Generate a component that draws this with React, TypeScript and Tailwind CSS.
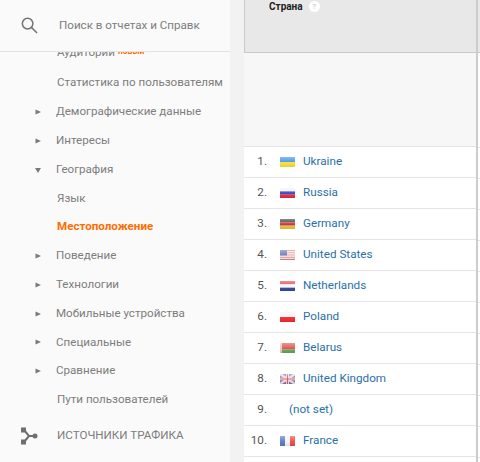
const FONT = "font-['Roboto',sans-serif]";

function Arrow({ open }: { open?: boolean }) {
  return (
    <svg width="6" height="6" viewBox="0 0 6 6" className="shrink-0">
      {open ? <path d="M0 1h6L3 6z" fill="#7a7a7a" /> : <path d="M0.5 0.5L6 3 0.5 5.5z" fill="#7a7a7a" />}
    </svg>
  );
}

function NavRow({ label, arrow, open, active }: { label: string; arrow?: boolean; open?: boolean; active?: boolean }) {
  return (
    <div className="flex h-[28.8px] items-center pl-[35px]">
      <div className={arrow ? "flex w-[21px] shrink-0 items-center" : "flex w-[22px] shrink-0 items-center"}>{arrow && <Arrow open={open} />}</div>
      <span className={active ? "text-[11.6px] font-bold text-[#ff6d00]" : "text-[11.6px] text-[#7d7d7d]"}>{label}</span>
    </div>
  );
}

function Flag({ code }: { code: string }) {
  const stripes: Record<string, string[]> = {
    ua: ["#3f8fe8", "#f7e03c"],
    ru: ["#f4f4f8", "#3240c8", "#ea2a30"],
    de: ["#3a3a3a", "#c8322c", "#e6c23c"],
    nl: ["#e8454a", "#f6f6f6", "#34489c"],
    pl: ["#f4f4f4", "#f02a30"],
  };
  let body;
  if (code === "us") {
    body = (
      <>
        {[0, 1, 2, 3, 4, 5].map((i) => (
          <rect key={i} x="0" y={i * 2} width="15" height="1" fill="#e06a70" />
        ))}
        {[0, 1, 2, 3, 4, 5].map((i) => (
          <rect key={i} x="0" y={i * 2 + 1} width="15" height="1" fill="#f6e8e8" />
        ))}
        <rect width="7" height="6" fill="#6478c0" />
      </>
    );
  } else if (code === "by") {
    body = (
      <>
        <rect width="15" height="7" fill="#e0504a" />
        <rect y="7" width="15" height="4" fill="#5fa85a" />
        <rect width="2" height="11" fill="#f4c4c0" />
      </>
    );
  } else if (code === "gb") {
    body = (
      <>
        <rect width="15" height="11" fill="#6a78b8" />
        <path d="M0 0L15 11M15 0L0 11" stroke="#f2d8dc" strokeWidth="2.5" />
        <path d="M7.5 0V11M0 5.5H15" stroke="#f6e8ea" strokeWidth="3" />
        <path d="M7.5 0V11M0 5.5H15" stroke="#e0505c" strokeWidth="1.2" />
      </>
    );
  } else if (code === "fr") {
    body = (
      <>
        <rect width="5" height="11" fill="#5a78c8" />
        <rect x="5" width="5" height="11" fill="#f4f4f6" />
        <rect x="10" width="5" height="11" fill="#ec4a44" />
      </>
    );
  } else {
    const s = stripes[code];
    const h = 11 / s.length;
    body = s.map((c, i) => <rect key={i} y={i * h} width="15" height={h} fill={c} />);
  }
  return (
    <svg width="15" height="10" viewBox="0 0 15 11" preserveAspectRatio="none" className="mt-[2px] shrink-0">
      <defs>
        <linearGradient id={`gloss-${code}`} x1="0" y1="0" x2="0" y2="1">
          <stop offset="0" stopColor="#ffffff" stopOpacity="0.4" />
          <stop offset="0.55" stopColor="#ffffff" stopOpacity="0.05" />
          <stop offset="1" stopColor="#000000" stopOpacity="0.08" />
        </linearGradient>
      </defs>
      {body}
      <rect width="15" height="11" fill={`url(#gloss-${code})`} />
    </svg>
  );
}

function Row({ n, name, code }: { n: number; name: string; code?: string }) {
  return (
    <div className="flex h-[31px] items-center border-b border-[#e5e5e5] bg-white pb-[1px]">
      <span className="w-[23px] shrink-0 text-right text-[11.7px] text-[#555555]">{n}.</span>
      {code ? (
        <div className="flex items-center pl-[13px]">
          <Flag code={code} />
          <span className="pl-[8px] text-[11.7px] text-[#2a70a8]">{name}</span>
        </div>
      ) : (
        <span className="pl-[22px] text-[11.7px] text-[#2a70a8]">{name}</span>
      )}
    </div>
  );
}

const ROWS = [
  { name: "Ukraine", code: "ua" },
  { name: "Russia", code: "ru" },
  { name: "Germany", code: "de" },
  { name: "United States", code: "us" },
  { name: "Netherlands", code: "nl" },
  { name: "Poland", code: "pl" },
  { name: "Belarus", code: "by" },
  { name: "United Kingdom", code: "gb" },
  { name: "(not set)" },
  { name: "France", code: "fr" },
];

export default function App() {
  return (
    <div className={`flex h-[462px] w-[480px] overflow-hidden bg-white ${FONT}`}>
      <aside className="flex h-full w-[230px] shrink-0 flex-col bg-[#fafafa]">
        <div className="flex h-[52px] shrink-0 items-center border-b border-[#e3e3e3] pl-[21px]">
          <svg width="17" height="17" viewBox="0 0 18 18" fill="none" stroke="#757575" strokeWidth="1.6" className="shrink-0">
            <circle cx="7" cy="7" r="5.6" />
            <path d="M11 11l6 6" />
          </svg>
          <span className="pl-[21px] text-[11.6px] text-[#7d7d7d]">Поиск в отчетах и Справк</span>
        </div>
        <div className="relative h-[11px] shrink-0 overflow-hidden">
          <div className="absolute left-[57px] top-[-9px] flex items-start">
            <span className="text-[11.6px] leading-[18px] text-[#7d7d7d]">Аудитории</span>
            <span className="pl-[3px] pt-[3px] text-[8.5px] font-bold leading-[10px] text-[#ff6d00]">новый</span>
          </div>
        </div>
        <div className="flex h-[34.6px] shrink-0 items-center pl-[57px] pt-[5px] text-[11.6px] text-[#7d7d7d]">Статистика по пользователям</div>
        <div className="flex flex-col">
          <NavRow label="Демографические данные" arrow />
          <NavRow label="Интересы" arrow />
          <NavRow label="География" arrow open />
          <NavRow label="Язык" />
          <NavRow label="Местоположение" active />
          <NavRow label="Поведение" arrow />
          <NavRow label="Технологии" arrow />
          <NavRow label="Мобильные устройства" arrow />
          <NavRow label="Специальные" arrow />
          <NavRow label="Сравнение" arrow />
          <NavRow label="Пути пользователей" />
        </div>
        <div className="flex h-[43px] items-center pl-[20px]">
          <svg width="18" height="18" viewBox="0 0 18 18" className="shrink-0" fill="#6f6f6f">
            <rect x="1" y="0.5" width="5" height="5" />
            <rect x="1" y="12.5" width="5" height="5" />
            <circle cx="15" cy="9" r="2.5" />
            <path d="M4 3L9 9h6M4 15L9 9" stroke="#6f6f6f" strokeWidth="2" fill="none" />
          </svg>
          <span className="pl-[19px] text-[11.6px] text-[#7d7d7d]">ИСТОЧНИКИ ТРАФИКА</span>
        </div>
      </aside>
      <div className="h-full w-[14px] shrink-0 bg-[#f2f2f2]" />
      <main className="h-full w-[234px] shrink-0 border-r-2 border-[#cccccc]">
        <div className="h-[53px] border-b border-l border-[#c9c9c9] bg-[#e8e8e8] pl-[24px] pt-[1px]">
          <div className="flex items-center">
            <span className="text-[10px] font-bold leading-[11px] text-[#222222]">Страна</span>
            <span className="ml-[6px] flex h-[11px] w-[11px] items-center justify-center rounded-full bg-white text-[8px] leading-none text-[#c4c4c4]">?</span>
          </div>
        </div>
        <div className="h-[94px] border-b border-[#e5e5e5] bg-[#f7f7f7]" />
        {ROWS.map((r, i) => (
          <Row key={r.name} n={i + 1} name={r.name} code={r.code} />
        ))}
      </main>
      <div className="h-full flex-1 bg-white">
        <div className="h-[53px] border-b border-[#c9c9c9] bg-[#e8e8e8]" />
        <div className="h-[95px] border-b border-[#e5e5e5]" />
        {ROWS.map((r) => (
          <div key={r.name} className="h-[31px] border-b border-[#e5e5e5]" />
        ))}
      </div>
    </div>
  );
}
